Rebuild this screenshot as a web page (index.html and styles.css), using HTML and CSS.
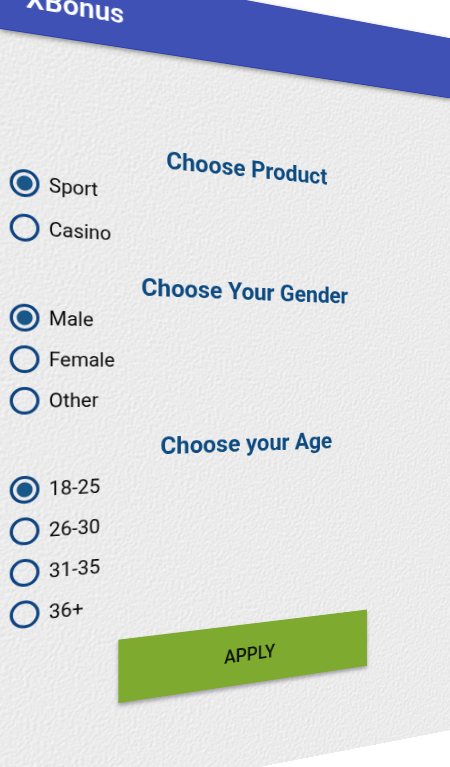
FILE: index.html
```html
<!DOCTYPE html>
<html lang="en">
<head>
<meta charset="utf-8">
<meta name="viewport" content="width=device-width, initial-scale=1">
<title>XBonus</title>
<link rel="stylesheet" href="styles.css">
</head>
<body>
<div class="stage">
  <div class="screen">
    <header class="app-bar"><h1 class="app-title">XBonus</h1></header>
    <form class="form">
      <fieldset class="group group-roomy">
        <legend class="group-title">Choose Product</legend>
        <label class="option"><input class="radio" type="radio" name="product" checked>Sport</label>
        <label class="option"><input class="radio" type="radio" name="product">Casino</label>
      </fieldset>
      <fieldset class="group">
        <legend class="group-title">Choose Your Gender</legend>
        <label class="option"><input class="radio" type="radio" name="gender" checked>Male</label>
        <label class="option"><input class="radio" type="radio" name="gender">Female</label>
        <label class="option"><input class="radio" type="radio" name="gender">Other</label>
      </fieldset>
      <fieldset class="group group-raised">
        <legend class="group-title">Choose your Age</legend>
        <label class="option"><input class="radio" type="radio" name="age" checked>18-25</label>
        <label class="option"><input class="radio" type="radio" name="age">26-30</label>
        <label class="option"><input class="radio" type="radio" name="age">31-35</label>
        <label class="option"><input class="radio" type="radio" name="age">36+</label>
      </fieldset>
      <button class="apply" type="button">APPLY</button>
    </form>
  </div>
</div>
</body>
</html>
```

FILE: styles.css
```css
* {
  box-sizing: border-box;
}

body {
  margin: 0;
  background: #fff;
  font-family: Roboto, "Liberation Sans", sans-serif;
  color: #080808;
}

/* The camera that looks at the tilted phone screen */
.stage {
  height: 100vh;
  overflow: hidden;
  perspective: 435px;
  perspective-origin: 50% 379px;
}

.screen {
  width: 115%;
  margin-top: -46px;
  transform: rotateY(12deg);
  transform-origin: left center;
  /* Embossed paper grain */
  background: #ebebeb url("data:image/svg+xml,%3Csvg xmlns='http://www.w3.org/2000/svg' width='256' height='256'%3E%3Cfilter id='p' x='0' y='0' width='100%25' height='100%25' color-interpolation-filters='sRGB'%3E%3CfeTurbulence type='fractalNoise' baseFrequency='.3' numOctaves='2' seed='4' stitchTiles='stitch'/%3E%3CfeDiffuseLighting surfaceScale='.14' diffuseConstant='1.3' lighting-color='%23ececec'%3E%3CfeDistantLight azimuth='225' elevation='50'/%3E%3C/feDiffuseLighting%3E%3C/filter%3E%3Crect width='256' height='256' filter='url(%23p)'/%3E%3C/svg%3E");
}

.stage::before {
  content: "";
  display: table;
}

.app-bar {
  display: flex;
  align-items: center;
  height: 75px;
  padding: 4px 24px 0;
  background: #3f51b5;
  border-bottom: 1px solid #2a3fb4;
  box-shadow: 0 2px 5px rgba(60, 55, 40, 0.5);
}

.app-title {
  margin: 0;
  font-size: 28px;
  font-weight: 600;
  color: #fff;
}

.form {
  display: flex;
  flex-direction: column;
  gap: 18px;
  padding: 99px 0 96px;
}

.group {
  min-width: 0;
  margin: 0;
  padding: 0;
  border: 0;
}

.group-title {
  width: 100%;
  padding: 0;
  font-size: 26px;
  font-weight: 700;
  line-height: 30px;
  text-align: center;
  color: #0d4a80;
}

.group-raised {
  margin-top: -4px;
}

.group-raised .group-title {
  padding-bottom: 4px;
}

.option {
  display: flex;
  align-items: center;
  gap: 9px;
  height: 42px;
  padding: 0 9px;
  font-size: 20px;
}

.group-roomy .option {
  height: 45px;
}

.radio {
  appearance: none;
  flex: none;
  width: 28px;
  height: 28px;
  margin: 0;
  border: 3px solid #0d437f;
  border-radius: 50%;
}

.radio:checked {
  background: radial-gradient(circle, #195788 7px, transparent 8px);
}

.apply {
  align-self: center;
  width: 288px;
  height: 67px;
  margin-top: -2px;
  padding: 0;
  border: 0;
  background: #7faa30;
  box-shadow: 0 3px 4px rgba(60, 50, 80, 0.4);
  font: 500 20px Roboto, "Liberation Sans", sans-serif;
  color: #0c1400;
}
```
